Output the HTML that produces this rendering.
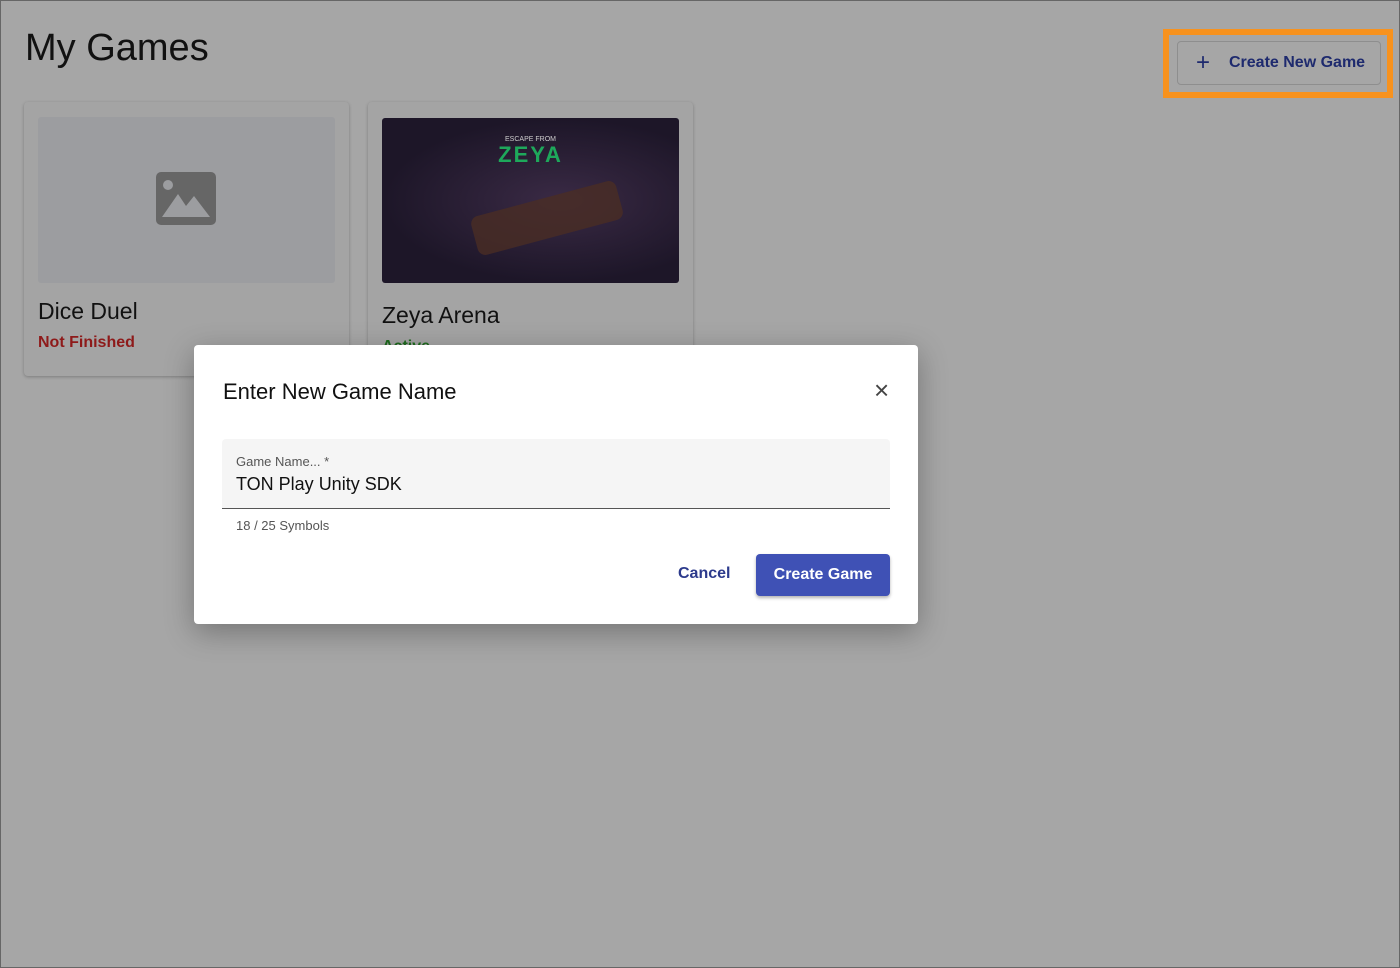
<!DOCTYPE html>
<html><head><meta charset="utf-8"><style>
*{box-sizing:border-box;margin:0;padding:0}
body{width:1400px;height:968px;background:#a6a6a6;font-family:"Liberation Sans",sans-serif;position:relative;overflow:hidden}
.frame{position:absolute;left:0;top:0;width:1400px;height:968px;border:1px solid #666;pointer-events:none}
h1{position:absolute;left:25px;top:27px;font-size:38px;font-weight:400;color:#111}
.card{position:absolute;top:102px;width:325px;height:274px;background:#a4a4a4;border-radius:4px;box-shadow:0 1px 3px rgba(0,0,0,.25)}
.img{position:absolute;left:14px;top:15px;width:297px;height:166px;border-radius:3px}
.t{position:absolute;left:14px;font-size:23px;color:#111}
.orange{position:absolute;left:1163px;top:29px;width:230px;height:69px;border:6px solid #f7921e}
.cbtn{position:absolute;left:1177px;top:41px;width:204px;height:44px;border:1px solid #8e8e8e;border-radius:4px;color:#1e2a6e;font-size:16px;font-weight:bold;line-height:42px;padding-left:51px}
.dlg{position:absolute;left:194px;top:345px;width:724px;height:279px;background:#fff;border-radius:4px;box-shadow:0 8px 30px rgba(0,0,0,.3)}
</style></head><body>
<h1>My Games</h1>
<div class="card" style="left:24px">
<div class="img" style="background:#9c9da0"><svg style="position:absolute;left:118px;top:55px" width="60" height="53" viewBox="0 0 60 53"><rect width="60" height="53" rx="5" fill="#666"/><circle cx="12" cy="13" r="5" fill="#9c9da0"/><path d="M6 45 L22 22 L30 34 L38 24 L54 45Z" fill="#9c9da0"/></svg></div>
<div class="t" style="top:196px">Dice Duel</div>
<div style="position:absolute;left:14px;top:232px;color:#8e1a1a;font-size:16px;font-weight:bold">Not Finished</div>
</div>
<div class="card" style="left:368px;height:250px">
<div class="img" style="background:radial-gradient(ellipse at 60% 50%,#3a2a45,#1d1628 70%);top:16px;height:165px">
<div style="position:absolute;width:100%;text-align:center;top:18px;color:#ccc;font-size:7px">ESCAPE FROM</div>
<div style="position:absolute;width:100%;text-align:center;top:24px;color:#1ea85b;font-size:22px;font-weight:bold;letter-spacing:2px">ZEYA</div>
<div style="position:absolute;left:90px;top:80px;width:150px;height:40px;background:#4a2d24;transform:rotate(-15deg);border-radius:8px;opacity:.8"></div>
</div>
<div class="t" style="top:200px">Zeya Arena</div>
<div style="position:absolute;left:14px;top:236px;color:#1f6b1f;font-size:16px;font-weight:bold">Active</div>
</div>
<div class="orange"></div>
<div class="cbtn"><span style="position:absolute;left:18px;font-size:24px;font-weight:400">+</span>Create New Game</div>
<div class="dlg">
<div style="position:absolute;left:29px;top:34px;font-size:22px;color:#111">Enter New Game Name</div>
<div style="position:absolute;left:680px;top:30px;font-size:26px;color:#444">×</div>
<div style="position:absolute;left:28px;top:94px;width:668px;height:70px;background:#f5f5f5;border-bottom:1px solid #555;border-radius:4px 4px 0 0">
<div style="position:absolute;left:14px;top:15px;font-size:13px;color:#555">Game Name... *</div>
<div style="position:absolute;left:14px;top:35px;font-size:18px;color:#111">TON Play Unity SDK</div>
</div>
<div style="position:absolute;left:42px;top:173px;font-size:13px;color:#555">18 / 25 Symbols</div>
<div style="position:absolute;left:484px;top:220px;font-size:16px;font-weight:bold;color:#2c3a8c">Cancel</div>
<div style="position:absolute;left:562px;top:209px;width:134px;height:42px;background:#3f51b5;border-radius:4px;box-shadow:0 2px 3px rgba(0,0,0,.3);color:#fff;font-size:16px;font-weight:bold;text-align:center;line-height:42px">Create Game</div>
</div>
<div class="frame"></div>
</body></html>
